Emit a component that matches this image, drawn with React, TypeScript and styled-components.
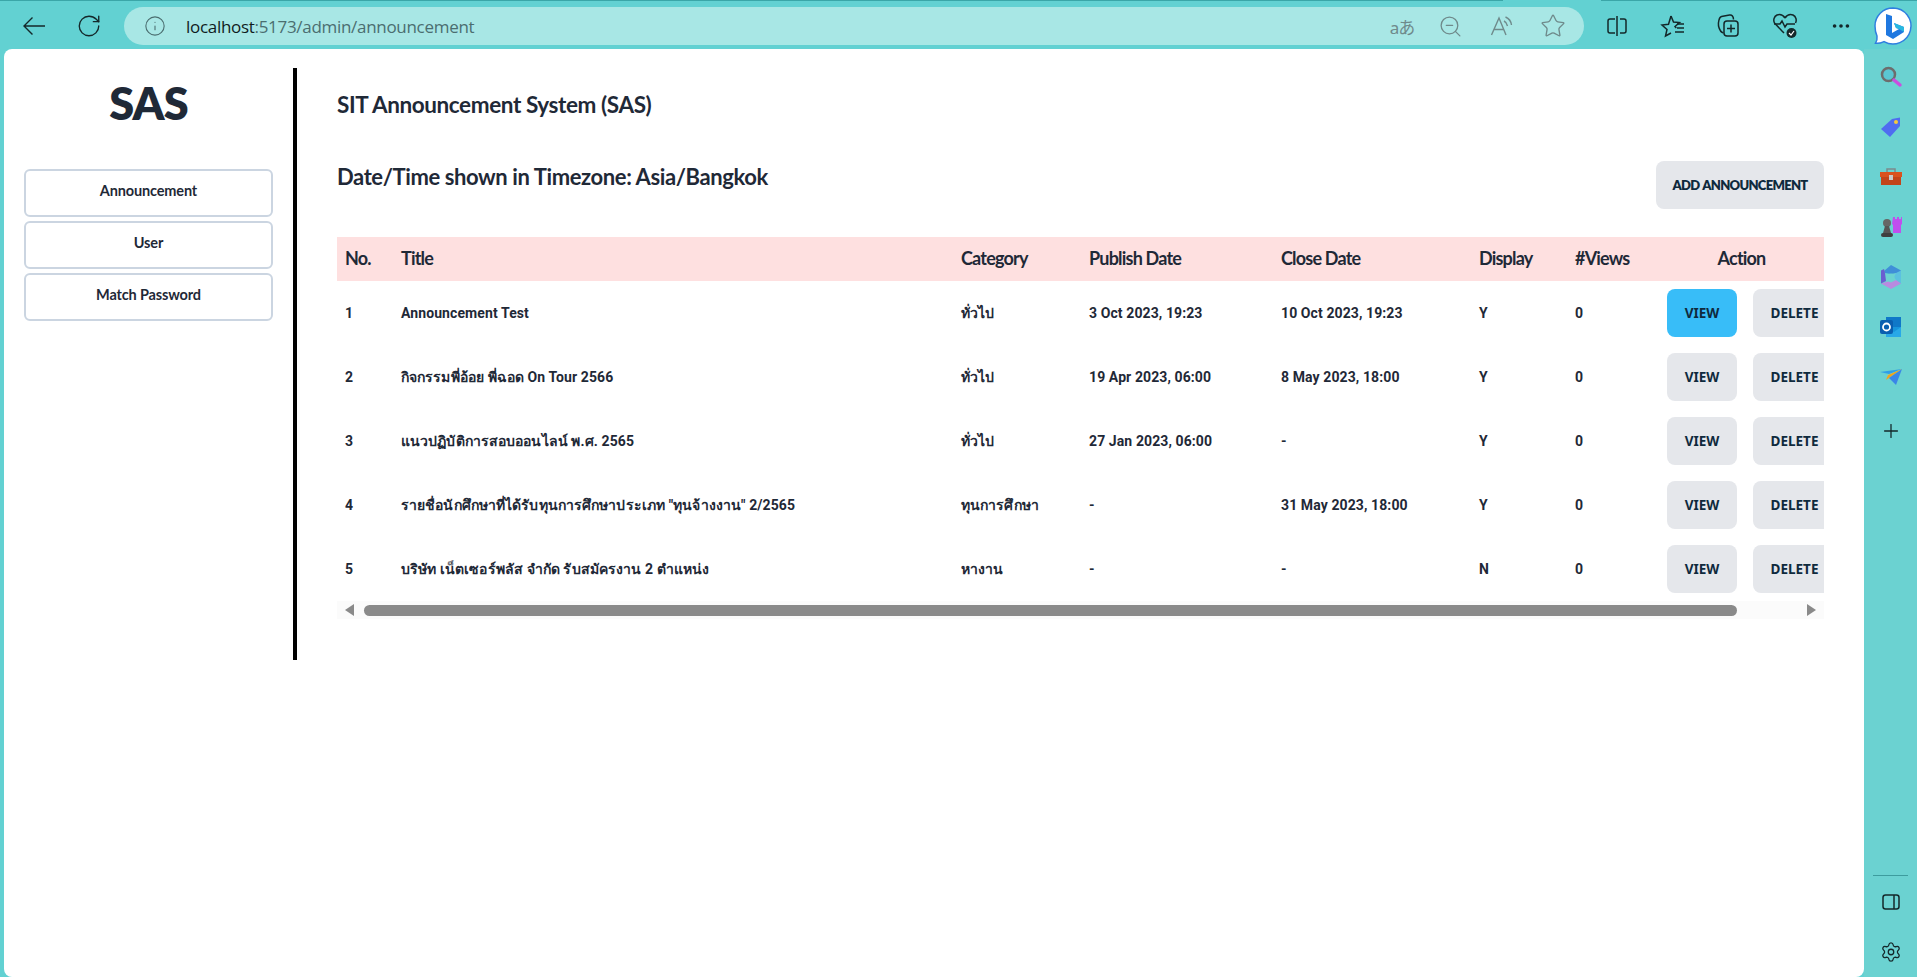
import React from 'react';
import styled, { createGlobalStyle } from 'styled-components';
import { Info, MoreHorizontal, Plus, RotateCw, Settings, Star, ZoomOut } from 'lucide-react';

type Announcement = {
  title: React.ReactNode;
  category: string;
  publish: string;
  close: string;
  display: string;
};

const GlobalStyle = createGlobalStyle`
  html, body {
    margin: 0;
    height: 100%;
    overflow: hidden;
    background: #62d1d2;
  }

  * {
    box-sizing: border-box;
  }
`;

const Window = styled.div`
  position: relative;
  width: 1917px;
  height: 977px;
  display: flex;
  flex-direction: column;
  border-top: 1px solid #3ba6a8;
  background: #62d1d2;
  font-family: 'Roboto', sans-serif;
`;

const TabNotch = styled.div`
  position: absolute;
  top: -1px;
  left: 1503px;
  width: 98px;
  height: 1px;
  background: #62d1d2;
`;

const Toolbar = styled.header`
  height: 48px;
  flex: none;
  display: flex;
  align-items: center;
  padding-left: 6px;
  padding-top: 2px;
`;

const ToolSlot = styled.span<{ $wide?: boolean }>`
  width: ${ ({ $wide }) => ($wide ? '56px' : '55px') };
  flex: none;
  display: flex;
  justify-content: center;
  align-items: center;
  color: #14282a;
`;

const AddressBar = styled.div`
  width: 1460px;
  height: 38px;
  margin-left: 8px;
  margin-right: 5px;
  flex: none;
  display: flex;
  align-items: center;
  border-radius: 19px;
  background: #a8e7e5;
  padding-left: 20px;
`;

const Url = styled.span`
  flex: 1;
  margin-left: 20px;
  font-family: 'Open Sans', sans-serif;
  font-size: 17px;
  letter-spacing: -0.3px;
  color: #4b6e70;

  b {
    font-weight: 400;
    color: #101c1d;
  }
`;

const BarIcons = styled.div`
  display: flex;
  align-items: center;
  color: #6f8a8b;
  padding-right: 6px;
`;

const BarSlot = styled.span`
  width: 51px;
  display: flex;
  justify-content: center;
  align-items: center;
`;

const TranslateGlyph = styled.span`
  margin-left: 5px;
  font-family: 'Noto Sans', 'Noto Sans CJK JP', sans-serif;
  font-size: 17px;
  letter-spacing: -1px;
  color: #6f8a8b;
`;

const BingSlot = styled.span`
  margin-left: 3px;
  display: flex;
`;

const Body = styled.div`
  flex: 1;
  display: flex;
  min-height: 0;
`;

const Card = styled.div`
  width: 1860px;
  margin-left: 4px;
  display: flex;
  align-items: flex-start;
  padding-top: 19px;
  background: #fff;
  border-radius: 8px;
  color: #1f2937;
`;

const Sidebar = styled.aside`
  width: 293px;
  height: 592px;
  flex: none;
  padding: 0 20px;
  border-right: 4px solid #000;
  display: flex;
  flex-direction: column;
  align-items: stretch;
`;

const Logo = styled.h1`
  margin: 8px 0 0;
  height: 93px;
  text-align: center;
  font-family: 'Lato', sans-serif;
  font-size: 45px;
  line-height: 54px;
  font-weight: 800;
  letter-spacing: -0.8px;
  color: #1f2937;
`;

const NavList = styled.nav`
  display: flex;
  flex-direction: column;
  gap: 4px;
`;

const NavButton = styled.button`
  height: 48px;
  padding: 0 0 5px;
  border: 2px solid #cbd5e1;
  border-radius: 6px;
  background: #fff;
  font-family: 'Lato', sans-serif;
  font-size: 14.5px;
  font-weight: 700;
  letter-spacing: -0.15px;
  color: #1f2937;
`;

const Main = styled.main`
  flex: 1;
  min-width: 0;
  padding: 0 40px;
`;

const PageTitle = styled.h2`
  margin: 22px 0 0;
  font-family: 'Lato', sans-serif;
  font-size: 22.5px;
  line-height: 30px;
  font-weight: 700;
  letter-spacing: -0.4px;
  color: #1f2937;
`;

const TimezoneRow = styled.div`
  height: 76px;
  margin-top: 41px;
  display: flex;
  justify-content: space-between;
  align-items: flex-start;
`;

const Timezone = styled.h3`
  margin: 0;
  font-family: 'Lato', sans-serif;
  font-size: 22px;
  line-height: 32px;
  font-weight: 700;
  letter-spacing: -0.4px;
  color: #1f2937;
`;

const AddButton = styled.button`
  width: 168px;
  height: 48px;
  padding: 0;
  border: 0;
  border-radius: 8px;
  background: #e5e7eb;
  font-family: 'Lato', sans-serif;
  font-size: 13px;
  font-weight: 800;
  letter-spacing: -0.7px;
  word-spacing: 1px;
  color: #0f2a3d;
`;

const TableClip = styled.div`
  width: 1487px;
  overflow: hidden;
`;

const Table = styled.table`
  width: 1487px;
  table-layout: fixed;
  border-collapse: collapse;
  font-size: 14px;
  letter-spacing: 0.1px;
`;

const HeadRow = styled.tr`
  height: 44px;
  background: #fee0e0;
`;

const HeadCell = styled.th<{ $center?: boolean }>`
  padding: 0 8px 2px;
  text-align: ${ ({ $center }) => ($center ? 'center' : 'left') };
  font-family: 'Lato', sans-serif;
  font-size: 18px;
  font-weight: 700;
  letter-spacing: -0.8px;
  color: #1f2937;
  white-space: nowrap;
`;

const Row = styled.tr`
  height: 64px;
`;

const Cell = styled.td`
  padding: 0 8px;
  font-weight: 700;
  color: #1f2937;
  white-space: nowrap;
`;

const ActionGroup = styled.div`
  display: flex;
  gap: 16px;
  width: 200px;
`;

const ActionButton = styled.button<{ $active?: boolean; $wide?: boolean }>`
  width: ${ ({ $wide }) => ($wide ? '83px' : '70px') };
  height: 48px;
  padding: 0;
  flex: none;
  border: 0;
  border-radius: 8px;
  background: ${ ({ $active }) => ($active ? '#38bdf8' : '#e5e7eb') };
  font-family: 'Noto Sans', sans-serif;
  font-size: 13.5px;
  font-weight: 700;
  color: #0f2a3d;
`;

const ScrollTrack = styled.div`
  width: 1487px;
  height: 18px;
  display: flex;
  align-items: center;
  background: #fbfbfb;
  padding: 0 8px;
`;

const ArrowIcon = styled.svg`
  width: 10px;
  height: 12px;
  flex: none;
  fill: #8a8a8a;
`;

const ScrollThumb = styled.div`
  width: 1373px;
  height: 11px;
  margin: 0 auto 0 9px;
  border-radius: 6px;
  background: #8a8a8a;
`;

const SideRail = styled.aside`
  flex: 1;
  display: flex;
  flex-direction: column;
  align-items: center;
  background: #6bd2d1;
  padding-top: 3px;
`;

const RailSlot = styled.span`
  height: 50px;
  flex: none;
  display: flex;
  justify-content: center;
  align-items: center;
  color: #14282a;
`;

const AddSlot = styled(RailSlot)`
  margin-top: 4px;
`;

const RailSpacer = styled.div`
  flex: 1;
`;

const RailDivider = styled.div`
  width: 35px;
  height: 1px;
  background: #3d9c9e;
  margin-bottom: 1px;
`;

const BackIcon = () => (
  <svg width='24' height='24' viewBox='0 0 24 24' fill='none' stroke='currentColor' strokeWidth='1.400'>
    <path d='M23 12H2M10.500 3.500L2 12l8.500 8.500' />
  </svg>
);

const BingIcon = () => (
  <svg width='42' height='42' viewBox='0 0 42 42'>
    <path d='M21 3a18 18 0 1 1-9 33.600C9 38 5.500 38.600 3.500 38.200 5 36 5.300 33.500 5 31 3.700 28.200 3 24.700 3 21 3 11 11 3 21 3z' fill='#fff' stroke='#2f7fe0' strokeWidth='1.500' />
    <path d='M14 9l6 2v17l7-4-3-1-2-5 10 4v5l-11 7-7-4z' fill='#1f78e0' />
    <path d='M22 18l10 4v5l-5-3-3-1z' fill='#28b8e0' />
  </svg>
);

const ReadAloudIcon = () => (
  <svg width='26' height='26' viewBox='0 0 26 26' fill='none' stroke='currentColor' strokeWidth='1.400'>
    <path d='M2.500 22L10 5l7 17M5 16.500h10' />
    <path d='M15 8c2 1 3 2.500 3.500 5M16.500 4c3.500 1.500 5.500 4 6 8' />
  </svg>
);

const SplitIcon = () => (
  <svg width='24' height='24' viewBox='0 0 24 24' fill='none' stroke='currentColor' strokeWidth='1.500'>
    <path d='M10 5H5a2 2 0 0 0-2 2v10a2 2 0 0 0 2 2h5M15 5h4a2 2 0 0 1 2 2v10a2 2 0 0 1-2 2h-4M12 2v20' />
  </svg>
);

const FavoritesIcon = () => (
  <svg width='26' height='26' viewBox='0 0 26 26' fill='none' stroke='currentColor' strokeWidth='1.500'>
    <path d='M11 3l2.500 6 6 .5-4.500 4 1.300 1.500M11 20l-5.500 3 1.500-6.500L2 12l6.500-.7L11 3' />
    <path d='M17 11h7M17 15h7M15 19h9' />
  </svg>
);

const CollectionsIcon = () => (
  <svg width='26' height='26' viewBox='0 0 26 26' fill='none' stroke='currentColor' strokeWidth='1.500'>
    <rect x='8' y='8' width='14' height='15' rx='3' />
    <path d='M15 11.500v8M11 15.500h8M7.500 20c-3-.5-4-3-5-7-.5-3 .5-9 3-9.500L13.500 2c2.500-.5 4 1.500 4 4.500' />
  </svg>
);

const HealthIcon = () => (
  <svg width='28' height='28' viewBox='0 0 28 28' fill='none' stroke='currentColor' strokeWidth='1.500'>
    <path d='M14 6c2-3 5-4 8-3 3 1.500 4 5 2.500 8M14 6C12 3 9 2 6 3 3 4.500 2 8 3.500 11L11 19l2 2' />
    <path d='M3 12h6l2-3 3 6 2-3h8' />
    <circle cx='20.500' cy='21' r='5' fill='#14282a' stroke='none' />
    <path d='M18 21l2 2 3-4' stroke='#fff' strokeWidth='1.200' />
  </svg>
);

const PanelIcon = () => (
  <svg width='20' height='20' viewBox='0 0 20 20' fill='none' stroke='currentColor' strokeWidth='1.500'>
    <rect x='2' y='3' width='16' height='14' rx='2.500' />
    <path d='M13 3v14' />
  </svg>
);

const SearchRailIcon = () => (
  <svg width='24' height='24' viewBox='0 0 24 24' fill='none'>
    <circle cx='9.500' cy='9.500' r='6.500' fill='#5bc6d2' stroke='#6d6d6d' strokeWidth='2.500' />
    <path d='M15 15l6 5' stroke='#c94fe0' strokeWidth='3.500' strokeLinecap='round' />
  </svg>
);

const TagRailIcon = () => (
  <svg width='24' height='24' viewBox='0 0 24 24'>
    <path d='M2 14L13 4l8-1.500V11L11 22z' fill='#4f6cf0' />
    <circle cx='17' cy='7' r='2' fill='#f5c93c' />
  </svg>
);

const ToolboxRailIcon = () => (
  <svg width='24' height='24' viewBox='0 0 24 24'>
    <path d='M8 7V4h8v3' fill='none' stroke='#7c8b8c' strokeWidth='1.500' />
    <rect x='1' y='7' width='22' height='5' fill='#d9521f' />
    <rect x='2' y='12' width='20' height='8' fill='#c2441a' />
    <rect x='10' y='10' width='4' height='5' fill='#c9c9c9' />
  </svg>
);

const ChessRailIcon = () => (
  <svg width='26' height='26' viewBox='0 0 26 26'>
    <path d='M15 3h2v2h2V3h2v2h2V3h1v7l-1 1v8h-8v-8l-1-1z' fill='#c04fee' />
    <circle cx='9' cy='9' r='4' fill='#666' />
    <path d='M7 12h4l2 7H5z' fill='#555' />
    <rect x='3' y='19' width='12' height='4' rx='2' fill='#3f3f3f' />
  </svg>
);

const OfficeRailIcon = () => (
  <svg width='26' height='26' viewBox='0 0 26 26'>
    <path d='M13 1l10 5.500V12l-5-3-5 1-6-1-1-2z' fill='#3f8fd8' />
    <path d='M23 6.500v13l-5 2.500v-6l-2-3 2-4z' fill='#5cc1e0' />
    <path d='M18 16l5 3.500L13 25l-10-5.500 7-2 3 1z' fill='#b98ae0' />
    <path d='M3 6.500L6 5l1 4 1 8-5 2.500z' fill='#6a5dd0' />
    <circle cx='13' cy='13' r='3.500' fill='#6bd2d1' />
  </svg>
);

const OutlookRailIcon = () => (
  <svg width='24' height='24' viewBox='0 0 24 24'>
    <rect x='7' y='2' width='15' height='11' fill='#0f78c8' />
    <path d='M7 12h15v10H7z' fill='#1694dc' />
    <path d='M7 12l8 5 7-5v10H7z' fill='#28a8e8' />
    <rect x='1' y='5' width='13' height='14' rx='2' fill='#0a5fb0' />
    <circle cx='7.500' cy='12' r='3.500' fill='none' stroke='#fff' strokeWidth='1.800' />
  </svg>
);

const SendRailIcon = () => (
  <svg width='24' height='24' viewBox='0 0 24 24'>
    <path d='M1 7l22-3-13 5z' fill='#2f9fe8' />
    <path d='M23 4L9 10l-2 5z' fill='#f2a51c' />
    <path d='M23 4l-6 16-7-7z' fill='#3a86e8' />
  </svg>
);

const rows: Announcement[] = [
  { title: 'Announcement Test', category: 'ทั่วไป', publish: '3 Oct 2023, 19:23', close: '10 Oct 2023, 19:23', display: 'Y' },
  { title: 'กิจกรรมพี่อ้อย พี่ฉอด On Tour 2566', category: 'ทั่วไป', publish: '19 Apr 2023, 06:00', close: '8 May 2023, 18:00', display: 'Y' },
  { title: 'แนวปฏิบัติการสอบออนไลน์ พ.ศ. 2565', category: 'ทั่วไป', publish: '27 Jan 2023, 06:00', close: '-', display: 'Y' },
  { title: 'รายชื่อนักศึกษาที่ได้รับทุนการศึกษาประเภท "ทุนจ้างงาน" 2/2565', category: 'ทุนการศึกษา', publish: '-', close: '31 May 2023, 18:00', display: 'Y' },
  { title: 'บริษัท เน็ตเซอร์พลัส จำกัด รับสมัครงาน 2 ตำแหน่ง', category: 'หางาน', publish: '-', close: '-', display: 'N' },
];

const columnWidths = [56, 560, 128, 192, 198, 96, 92, 165];

const App = () => (
  <Window>
    <GlobalStyle />
    <TabNotch />
    <Toolbar>
      <ToolSlot><BackIcon /></ToolSlot>
      <ToolSlot><RotateCw size={26} strokeWidth={1.25} /></ToolSlot>
      <AddressBar>
        <Info size={22} strokeWidth={1.2} color='#4b6e70' />
        <Url><b>localhost</b>:5173/admin/announcement</Url>
        <BarIcons>
          <BarSlot><TranslateGlyph>aあ</TranslateGlyph></BarSlot>
          <BarSlot><ZoomOut size={25} strokeWidth={1.25} /></BarSlot>
          <BarSlot><ReadAloudIcon /></BarSlot>
          <BarSlot><Star size={26} strokeWidth={1.25} /></BarSlot>
        </BarIcons>
      </AddressBar>
      <ToolSlot $wide><SplitIcon /></ToolSlot>
      <ToolSlot $wide><FavoritesIcon /></ToolSlot>
      <ToolSlot $wide><CollectionsIcon /></ToolSlot>
      <ToolSlot $wide><HealthIcon /></ToolSlot>
      <ToolSlot $wide><MoreHorizontal size={22} strokeWidth={2} /></ToolSlot>
      <BingSlot><BingIcon /></BingSlot>
    </Toolbar>
    <Body>
      <Card>
        <Sidebar>
          <Logo>SAS</Logo>
          <NavList>
            <NavButton>Announcement</NavButton>
            <NavButton>User</NavButton>
            <NavButton>Match Password</NavButton>
          </NavList>
        </Sidebar>
        <Main>
          <PageTitle>SIT Announcement System (SAS)</PageTitle>
          <TimezoneRow>
            <Timezone>Date/Time shown in Timezone: Asia/Bangkok</Timezone>
            <AddButton>ADD ANNOUNCEMENT</AddButton>
          </TimezoneRow>
          <TableClip>
            <Table>
              <colgroup>
                {columnWidths.map((width, index) => <col key={index} width={width} />)}
              </colgroup>
              <thead>
                <HeadRow>
                  <HeadCell>No.</HeadCell>
                  <HeadCell>Title</HeadCell>
                  <HeadCell>Category</HeadCell>
                  <HeadCell>Publish Date</HeadCell>
                  <HeadCell>Close Date</HeadCell>
                  <HeadCell>Display</HeadCell>
                  <HeadCell>#Views</HeadCell>
                  <HeadCell $center>Action</HeadCell>
                </HeadRow>
              </thead>
              <tbody>
                {rows.map((row, index) => (
                  <Row key={index}>
                    <Cell>{index + 1}</Cell>
                    <Cell>{row.title}</Cell>
                    <Cell>{row.category}</Cell>
                    <Cell>{row.publish}</Cell>
                    <Cell>{row.close}</Cell>
                    <Cell>{row.display}</Cell>
                    <Cell>0</Cell>
                    <Cell>
                      <ActionGroup>
                        <ActionButton $active={index === 0}>VIEW</ActionButton>
                        <ActionButton $wide>DELETE</ActionButton>
                      </ActionGroup>
                    </Cell>
                  </Row>
                ))}
              </tbody>
            </Table>
          </TableClip>
          <ScrollTrack>
            <ArrowIcon viewBox='0 0 10 12'><path d='M9 0v12L0 6z' /></ArrowIcon>
            <ScrollThumb />
            <ArrowIcon viewBox='0 0 10 12'><path d='M1 0v12l9-6z' /></ArrowIcon>
          </ScrollTrack>
        </Main>
      </Card>
      <SideRail>
        <RailSlot><SearchRailIcon /></RailSlot>
        <RailSlot><TagRailIcon /></RailSlot>
        <RailSlot><ToolboxRailIcon /></RailSlot>
        <RailSlot><ChessRailIcon /></RailSlot>
        <RailSlot><OfficeRailIcon /></RailSlot>
        <RailSlot><OutlookRailIcon /></RailSlot>
        <RailSlot><SendRailIcon /></RailSlot>
        <AddSlot><Plus size={22} strokeWidth={1.4} /></AddSlot>
        <RailSpacer />
        <RailDivider />
        <RailSlot><PanelIcon /></RailSlot>
        <RailSlot><Settings size={22} strokeWidth={1.4} /></RailSlot>
      </SideRail>
    </Body>
  </Window>
);

export default App;
